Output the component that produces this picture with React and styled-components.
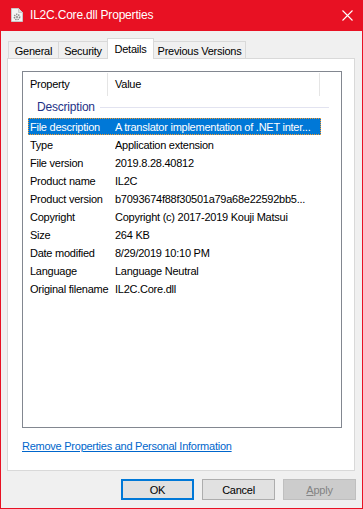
import React from 'react';
import styled, { createGlobalStyle } from 'styled-components';

const GlobalStyle = createGlobalStyle`
  * { box-sizing: border-box; }
  body {
    margin: 0;
    font-family: 'Liberation Sans', Arial, sans-serif;
    background: #f0f0f0;
  }
`;

const TABS = [
  { label: 'General', width: 51 },
  { label: 'Security', width: 50 },
  { label: 'Details', width: 47, active: true },
  { label: 'Previous Versions', width: 93 },
];

const DETAILS = [
  ['File description', 'A translator implementation of .NET inter...'],
  ['Type', 'Application extension'],
  ['File version', '2019.8.28.40812'],
  ['Product name', 'IL2C'],
  ['Product version', 'b7093674f88f30501a79a68e22592bb5...'],
  ['Copyright', 'Copyright (c) 2017-2019 Kouji Matsui'],
  ['Size', '264 KB'],
  ['Date modified', '8/29/2019 10:10 PM'],
  ['Language', 'Language Neutral'],
  ['Original filename', 'IL2C.Core.dll'],
];

function FileIcon() {
  return (
    <svg width='12' height='14' viewBox='0 0 12 14'>
      <path d='M0.5 0.5h7l4 4v9h-11z' fill='#f4f4f4' stroke='#c8c8c8' />
      <path d='M7.5 0.5v4h4' fill='#dcdcdc' stroke='#c8c8c8' />
      <circle cx='6' cy='9' r='2.6' fill='none' stroke='#8a8a8a' strokeWidth='1.6' strokeDasharray='1.3 0.9' />
      <circle cx='6' cy='9' r='1' fill='#8a8a8a' />
    </svg>
  );
}

function CloseIcon() {
  return (
    <svg width='11' height='11' viewBox='0 0 11 11'>
      <path d='M0.5 0.5l10 10M10.5 0.5l-10 10' stroke='#fff' strokeWidth='1.1' />
    </svg>
  );
}

export default function App() {
  return (
    <>
      <GlobalStyle />
      <Window>
        <TitleBar>
          <TitleIcon>
            <FileIcon />
          </TitleIcon>
          <Title>IL2C.Core.dll Properties</Title>
          <CloseBtn>
            <CloseIcon />
          </CloseBtn>
        </TitleBar>
        <Body>
          <TabStrip>
            {TABS.map((tab) => (
              <Tab key={tab.label} $w={tab.width} $active={tab.active}>
                {tab.label}
              </Tab>
            ))}
          </TabStrip>
          <TabPage>
            <ListView>
              <Header>
                <HeaderCell $w={85}>Property</HeaderCell>
                <HeaderCell $w={212}>Value</HeaderCell>
              </Header>
              <GroupHeader>
                <span>Description</span>
                <GroupLine />
              </GroupHeader>
              {DETAILS.map(([name, value], i) => (
                <Row key={name} $selected={i === 0}>
                  <NameCell>{name}</NameCell>
                  <ValueCell>{value}</ValueCell>
                </Row>
              ))}
            </ListView>
            <RemoveLink href='#'>Remove Properties and Personal Information</RemoveLink>
          </TabPage>
          <Footer>
            <Button $default>OK</Button>
            <Button>Cancel</Button>
            <Button disabled>
              <u>A</u>pply
            </Button>
          </Footer>
        </Body>
      </Window>
    </>
  );
}

const Window = styled.div`
  width: 363px;
  height: 509px;
  display: flex;
  flex-direction: column;
  border: 1px solid #e81123;
  border-top: none;
  background: #f0f0f0;
  font-size: 11px;
  letter-spacing: -0.25px;
  color: #000;
`;

const TitleBar = styled.div`
  height: 31px;
  flex-shrink: 0;
  display: flex;
  align-items: center;
  background: #e81123;
  color: #fff;
  padding-left: 10px;
`;

const TitleIcon = styled.div`
  display: flex;
  width: 19px;
  margin-top: -1px;
`;

const Title = styled.div`
  font-size: 12px;
  letter-spacing: -0.2px;
  flex: 1;
  margin-top: -1px;
`;

const CloseBtn = styled.div`
  display: flex;
  margin-right: 9px;
  margin-top: -1px;
`;

const Body = styled.div`
  flex: 1;
  display: flex;
  flex-direction: column;
  padding: 7px 7px 0 6px;
`;

const TabStrip = styled.div`
  height: 20px;
  display: flex;
  align-items: flex-start;
  padding-left: 1px;
`;

const Tab = styled.div`
  width: ${(p) => p.$w}px;
  height: ${(p) => (p.$active ? 21 : 17)}px;
  margin-top: ${(p) => (p.$active ? 0 : 3)}px;
  margin-left: -1px;
  display: flex;
  align-items: center;
  justify-content: center;
  padding-top: ${(p) => (p.$active ? 0 : 1)}px;
  border: 1px solid #d9d9d9;
  border-bottom: none;
  background: ${(p) => (p.$active ? '#fff' : '#f0f0f0')};
  position: relative;
  z-index: ${(p) => (p.$active ? 2 : 0)};
  &:first-child {
    margin-left: 0;
  }
`;

const TabPage = styled.div`
  height: 413px;
  display: flex;
  flex-direction: column;
  border: 1px solid #d9d9d9;
  background: #fff;
  padding: 12px 12px 0 14px;
  position: relative;
  z-index: 1;
`;

const ListView = styled.div`
  height: 357px;
  border: 1px solid #828790;
  background: #fff;
`;

const Header = styled.div`
  height: 25px;
  display: flex;
`;

const HeaderCell = styled.div`
  width: ${(p) => p.$w}px;
  display: flex;
  align-items: center;
  padding-left: 7px;
  padding-bottom: 1px;
  border-right: 1px solid #e5e5e5;
  margin: 1px 0 1px;
`;

const GroupHeader = styled.div`
  height: 21px;
  display: flex;
  align-items: center;
  padding: 0 12px 1px 14px;
  font-size: 12px;
  color: #1e3287;
  letter-spacing: -0.2px;
`;

const GroupLine = styled.div`
  flex: 1;
  height: 1px;
  margin-left: 5px;
  background: #e2e3f0;
`;

const Row = styled.div`
  width: 293px;
  height: 17px;
  margin: 0 0 1px 5px;
  display: flex;
  align-items: center;
  white-space: nowrap;
  background: ${(p) => (p.$selected ? '#0078d7' : 'transparent')};
  color: ${(p) => (p.$selected ? '#fff' : '#000')};
  outline: ${(p) => (p.$selected ? '1px dotted #f39a2c' : 'none')};
  outline-offset: -1px;
`;

const NameCell = styled.div`
  width: 87px;
  padding-left: 2px;
  overflow: hidden;
`;

const ValueCell = styled.div`
  flex: 1;
  overflow: hidden;
`;

const RemoveLink = styled.a`
  margin-top: 12px;
  align-self: flex-start;
  color: #0066cc;
  text-decoration: underline;
  font-size: 11px;
`;

const Footer = styled.div`
  display: flex;
  justify-content: flex-end;
  gap: 8px;
  padding: 8px 0 0;
  margin-right: -1px;
`;

const Button = styled.button`
  width: 73px;
  height: 21px;
  font-family: inherit;
  font-size: 11px;
  letter-spacing: -0.25px;
  padding: 0;
  background: #e1e1e1;
  color: #000;
  border: ${(p) => (p.$default ? '2px solid #0078d7' : '1px solid #adadad')};
  &:disabled {
    background: #cccccc;
    border-color: #bfbfbf;
    color: #838383;
  }
`;
